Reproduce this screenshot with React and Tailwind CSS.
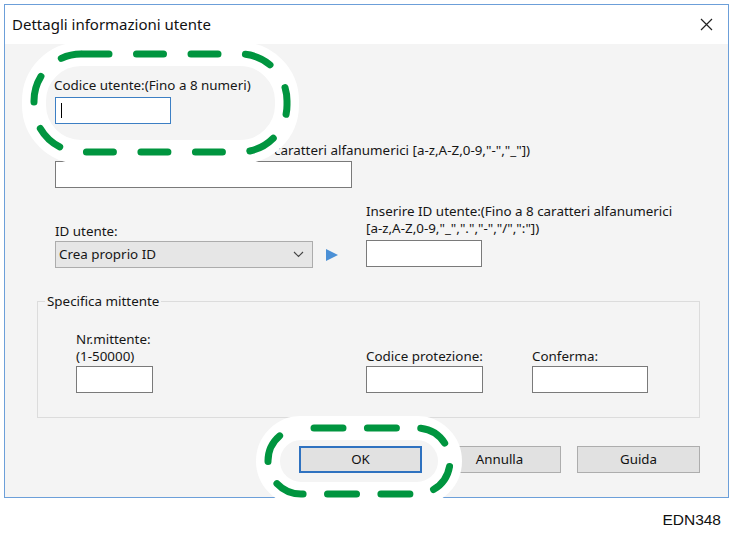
import React from "react";

const ui = { fontFamily: '"Noto Sans", "Open Sans", sans-serif' };

function TextBox({ className = "", active = false }) {
  return (
    <div
      className={`h-[27px] bg-white border ${
        active ? "border-[#3c7fc4]" : "border-[#7a7a7a]"
      } flex items-center ${className}`}
    >
      {active && <div className="ml-[5px] w-[1px] h-[15px] bg-black" />}
    </div>
  );
}

function Btn({ label, primary = false }) {
  return (
    <div
      className={`w-[123px] h-[27px] flex items-center justify-center text-[13.3px] text-[#111] ${
        primary
          ? "border-2 border-[#2f72c0] bg-[#e1e1e1]"
          : "border border-[#adadad] bg-[#e1e1e1]"
      }`}
    >
      {label}
    </div>
  );
}

// rounded outline path starting at top-left end of the straight edge, clockwise
function loop(x, y, w, h, r) {
  return `M${x + r},${y} H${x + w - r} A${r},${r} 0 0 1 ${x + w},${y + r} V${y + h - r} A${r},${r} 0 0 1 ${x + w - r},${y + h} H${x + r} A${r},${r} 0 0 1 ${x},${y + h - r} V${y + r} A${r},${r} 0 0 1 ${x + r},${y} Z`;
}

function Highlights() {
  const green = "#00953f";
  const a = loop(34, 54, 253, 98, 47);
  const b = loop(268, 428, 182, 66, 33);
  return (
    <svg
      className="absolute left-0 top-0 pointer-events-none"
      width="733"
      height="539"
      viewBox="0 0 733 539"
    >
      <path d={a} fill="none" stroke="#ffffff" strokeWidth="24" />
      <path d={b} fill="none" stroke="#ffffff" strokeWidth="24" />
      <path
        d={a}
        fill="none"
        stroke={green}
        strokeWidth="7"
        strokeLinecap="round"
        strokeDasharray="27 27.5"
        strokeDashoffset="-1"
      />
      <path
        d={b}
        fill="none"
        stroke={green}
        strokeWidth="7"
        strokeLinecap="round"
        strokeDasharray="29 24.4"
        strokeDashoffset="-13"
      />
    </svg>
  );
}

export default function App() {
  return (
    <div className="relative w-[733px] h-[539px] bg-white overflow-hidden" style={ui}>
      <div className="ml-[4px] mt-[4px] w-[725px] h-[494px] border border-[#6c9fd9] flex flex-col">
        {/* title bar */}
        <div className="h-[39px] bg-white flex items-center justify-between pl-[7px] pr-[15px]">
          <span className="text-[15px] text-[#111]">Dettagli informazioni utente</span>
          <svg width="13" height="13" viewBox="0 0 13 13">
            <path d="M1 1 L12 12 M12 1 L1 12" stroke="#222" strokeWidth="1.2" />
          </svg>
        </div>

        {/* body */}
        <div className="flex-1 bg-[#f4f4f4] pl-[50px] pr-[27px] pt-[33px] text-[13.4px] text-[#161616]">
          <div className="leading-[17px] -ml-[1px]">Codice utente:(Fino a 8 numeri)</div>
          <TextBox active className="mt-[3px] w-[116px] h-[26px]" />

          <div className="mt-[18px] leading-[17px]">
            Nome utente visualizzato:(Fino a 8 caratteri alfanumerici [a-z,A-Z,0-9,"-","_"])
          </div>
          <TextBox className="mt-[2px] w-[297px]" />

          <div className="mt-[15px] flex items-end">
            <div className="w-[311px]">
              <div className="leading-[17px]">ID utente:</div>
              <div className="mt-[1px] flex items-center">
                <div className="w-[258px] h-[27px] bg-[#e6e6e6] border border-[#acacac] flex items-center justify-between pl-[3px] pr-[8px]">
                  <span>Crea proprio ID</span>
                  <svg width="11" height="7" viewBox="0 0 11 7">
                    <path d="M1 1 L5.5 5.5 L10 1" fill="none" stroke="#444" strokeWidth="1.1" />
                  </svg>
                </div>
                <svg className="ml-[12px]" width="14" height="14" viewBox="0 0 14 14">
                  <path d="M1 1 L13 7 L1 13 Z" fill="#4b90d6" />
                </svg>
              </div>
            </div>
            <div className="flex-1">
              <div className="leading-[17px]">
                Inserire ID utente:(Fino a 8 caratteri alfanumerici
                <br />
                [a-z,A-Z,0-9,"_",".","-","/",":"])
              </div>
              <TextBox className="mt-[3px] w-[116px] mb-[1px]" />
            </div>
          </div>

          {/* group box */}
          <div className="relative mt-[33px] -ml-[18px] w-[663px] h-[117px] border border-[#dcdcdc]">
            <span className="absolute -top-[9px] left-[7px] px-[2px] bg-[#f4f4f4] leading-[17px]">Specifica mittente</span>
            <div className="flex items-end pt-[29px] pl-[38px]">
              <div className="w-[290px]">
                <div className="leading-[17px]">
                  Nr.mittente:
                  <br />
                  (1-50000)
                </div>
                <TextBox className="mt-[1px] w-[77px]" />
              </div>
              <div className="w-[166px]">
                <div className="leading-[17px]">Codice protezione:</div>
                <TextBox className="mt-[1px] w-[117px]" />
              </div>
              <div>
                <div className="leading-[17px]">Conferma:</div>
                <TextBox className="mt-[1px] w-[116px]" />
              </div>
            </div>
          </div>

          <div className="mt-[28px] -ml-[18px] w-[663px] flex justify-end gap-[16px]">
            <Btn label="OK" primary />
            <Btn label="Annulla" />
            <Btn label="Guida" />
          </div>
        </div>
      </div>

      <div
        className="absolute right-[12px] bottom-[8px] text-[15.5px] text-[#111]"
        style={{ fontFamily: '"Liberation Sans", Arial, sans-serif' }}
      >
        EDN348
      </div>

      <Highlights />
    </div>
  );
}
